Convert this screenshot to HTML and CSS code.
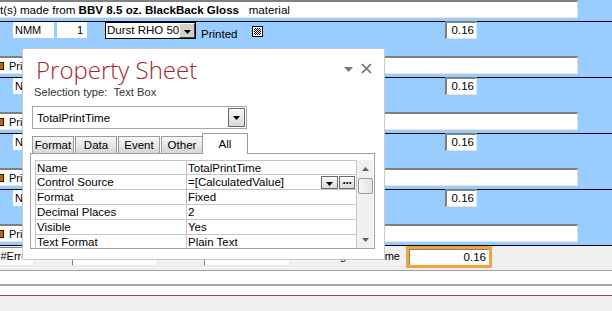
FILE: index.html
```html
<!DOCTYPE html>
<html>
<head>
<meta charset="utf-8">
<link rel="stylesheet" href="styles.css">
</head>
<body>
<div class="form">
  <div class="record">
    <div class="field"><span class="ftext top-text">t(s) made from <b>BBV 8.5 oz. BlackBack Gloss</b>&nbsp;&nbsp;&nbsp;material</span></div>
    <div class="detail">
      <div class="box nmm">NMM</div>
      <div class="box qty">1</div>
      <div class="combo"><span class="combo-text">Durst RHO 500</span><span class="combo-btn"><svg width="7" height="4" viewBox="0 0 7 4"><path d="M0 0H7L3.5 4Z" fill="#000"/></svg></span></div>
      <div class="plabel">Printed</div>
      <div class="check"><i></i></div>
      <div class="num">0.16</div>
    </div>
  </div>
  <div class="record">
    <div class="field"><span class="ficon"></span><span class="ftext">Printed</span></div>
    <div class="detail">
      <div class="box nmm">NMM</div>
      <div class="box qty">1</div>
      <div class="combo"><span class="combo-text">Durst RHO 500</span><span class="combo-btn"><svg width="7" height="4" viewBox="0 0 7 4"><path d="M0 0H7L3.5 4Z" fill="#000"/></svg></span></div>
      <div class="plabel">Printed</div>
      <div class="check"><i></i></div>
      <div class="num">0.16</div>
    </div>
  </div>
  <div class="record">
    <div class="field"><span class="ficon"></span><span class="ftext">Printed</span></div>
    <div class="detail">
      <div class="box nmm">NMM</div>
      <div class="box qty">1</div>
      <div class="combo"><span class="combo-text">Durst RHO 500</span><span class="combo-btn"><svg width="7" height="4" viewBox="0 0 7 4"><path d="M0 0H7L3.5 4Z" fill="#000"/></svg></span></div>
      <div class="plabel">Printed</div>
      <div class="check"><i></i></div>
      <div class="num">0.16</div>
    </div>
  </div>
  <div class="record">
    <div class="field"><span class="ficon"></span><span class="ftext">Printed</span></div>
    <div class="detail">
      <div class="box nmm">NMM</div>
      <div class="box qty">1</div>
      <div class="combo"><span class="combo-text">Durst RHO 500</span><span class="combo-btn"><svg width="7" height="4" viewBox="0 0 7 4"><path d="M0 0H7L3.5 4Z" fill="#000"/></svg></span></div>
      <div class="plabel">Printed</div>
      <div class="check"><i></i></div>
      <div class="num">0.16</div>
    </div>
  </div>
  <div class="field"><span class="ficon"></span><span class="ftext">Printed</span></div>
  <div class="footer">
    <div class="fbox fbox1">#Error</div>
    <div class="fbox fbox2">#Error</div>
    <div class="fbox fbox3">#Error</div>
    <div class="flabel"><span class="fl1">Total Printing</span><span class="fl2">Time</span></div>
    <div class="total"><div class="total-in">0.16</div></div>
  </div>
  <div class="bottom1"></div>
  <div class="bottom2"></div>
  <div class="bottom3"></div>
</div>

<div class="sheet">
  <div class="sheet-head">
    <div class="sheet-title">Property Sheet</div>
    <div class="sheet-icons">
      <svg width="9" height="5" viewBox="0 0 9 5"><path d="M0 0H9L4.5 5Z" fill="#7a7a7a"/></svg>
      <svg class="ic-close" width="11" height="11" viewBox="0 0 11 11"><path d="M1 1L10 10M10 1L1 10" stroke="#6e6e6e" stroke-width="1.7"/></svg>
    </div>
  </div>
  <div class="sel-type">Selection type:&nbsp; Text Box</div>
  <div class="sel-combo">
    <span class="sel-text">TotalPrintTime</span>
    <span class="sel-btn"><svg width="7" height="4" viewBox="0 0 7 4"><path d="M0 0H7L3.5 4Z" fill="#000"/></svg></span>
  </div>
  <div class="tabs">
    <div class="tab">Format</div>
    <div class="tab">Data</div>
    <div class="tab">Event</div>
    <div class="tab">Other</div>
    <div class="tab active">All</div>
  </div>
  <div class="panel">
    <div class="grid">
      <div class="table">
        <div class="row first"><div class="c-name">Name</div><div class="c-val">TotalPrintTime</div></div>
        <div class="row"><div class="c-name">Control Source</div><div class="c-val"><span class="v-text">=[CalculatedValue]</span><span class="mini"><svg width="7" height="4" viewBox="0 0 7 4"><path d="M0 0H7L3.5 4Z" fill="#000"/></svg></span><span class="mini dots">&middot;&middot;&middot;</span></div></div>
        <div class="row"><div class="c-name">Format</div><div class="c-val">Fixed</div></div>
        <div class="row"><div class="c-name">Decimal Places</div><div class="c-val">2</div></div>
        <div class="row"><div class="c-name">Visible</div><div class="c-val">Yes</div></div>
        <div class="row"><div class="c-name">Text Format</div><div class="c-val">Plain Text</div></div>
      </div>
      <div class="vscroll">
        <div class="sb-arrow"><svg width="7" height="4" viewBox="0 0 7 4"><path d="M0 4H7L3.5 0Z" fill="#606060"/></svg></div>
        <div class="sb-thumb"></div>
        <div class="sb-space"></div>
        <div class="sb-arrow"><svg width="7" height="4" viewBox="0 0 7 4"><path d="M0 0H7L3.5 4Z" fill="#606060"/></svg></div>
      </div>
    </div>
  </div>
  <div class="sheet-foot"></div>
</div>
</body>
</html>
```

FILE: styles.css
```css
* { box-sizing: border-box; }
html, body { margin: 0; padding: 0; }
body {
  width: 612px;
  height: 311px;
  overflow: hidden;
  position: relative;
  background: #99ccff;
  font-family: "Liberation Sans", Arial, sans-serif;
  font-size: 11px;
  color: #000;
}

/* ---------- background form ---------- */
.form { display: flex; flex-direction: column; height: 311px; }
.record { height: 56px; flex: none; }
.field {
  flex: none;
  width: 578px;
  height: 18px;
  background: #fff;
  border-top: 2px solid #808080;
  border-right: 1px solid #dcdcdc;
  border-bottom: 1px solid #e6e6e6;
  display: flex;
  align-items: center;
  white-space: nowrap;
  overflow: hidden;
  line-height: 14px;
}
.top-text { font-size: 11.6px; }
.ficon {
  width: 4px;
  height: 8px;
  background: #c8600c;
  border: 1px solid #2a1200;
  border-left: none;
  margin-right: 5px;
}
.detail {
  margin-top: 3px;
  height: 35px;
  border-top: 1px solid #000;
  display: flex;
  align-items: flex-start;
  padding-left: 13px;
}
.box {
  height: 16px;
  background: #fff;
  line-height: 16px;
  white-space: nowrap;
  overflow: hidden;
}
.nmm { width: 41px; padding-left: 2px; }
.qty { width: 30px; margin-left: 3px; text-align: right; padding-right: 4px; }
.combo {
  margin-left: 18px;
  width: 91px;
  height: 17px;
  border: 1px solid #000;
  background: #fff;
  display: flex;
}
.combo-text {
  flex: 1;
  overflow: hidden;
  white-space: nowrap;
  padding-left: 1px;
  line-height: 15px;
  font-size: 11.5px;
}
.combo-btn {
  width: 16px;
  height: 15px;
  background: #d4d0c8;
  border: 1px solid;
  border-color: #fff #404040 #404040 #fff;
  display: flex;
  align-items: flex-end;
  justify-content: center;
  padding-bottom: 3px;
}
.combo-btn svg { display: block; }
.plabel { margin-left: 5px; width: 51px; margin-top: 5px; font-size: 11.5px; line-height: 14px; }
.check {
  width: 11px;
  height: 11px;
  margin-top: 4px;
  border: 1px solid #000;
  padding: 1px;
  background: #fff;
}
.check i {
  display: block;
  width: 100%;
  height: 100%;
  background: repeating-conic-gradient(#000 0 25%, #fff 0 50%) 0 0 / 2px 2px;
}
.num {
  margin-left: 182px;
  margin-top: -1px;
  width: 32px;
  height: 18px;
  background: #fff;
  border-left: 2px solid #808080;
  border-top: 2px solid #808080;
  border-right: 1px solid #e4e4e4;
  border-bottom: 1px solid #e4e4e4;
  text-align: right;
  padding-right: 2px;
  line-height: 14px;
  font-size: 11.5px;
}

/* footer */
.footer {
  flex: none;
  margin-top: 3px;
  height: 25px;
  border-top: 1px solid #000;
  background: #f0f0f0;
  display: flex;
  align-items: flex-start;
}
.fbox {
  height: 19px;
  margin-top: 1px;
  background: #fff;
  border-left: 1px solid #808080;
  border-top: 1px solid #808080;
  border-right: 1px solid #e4e4e4;
  border-bottom: 1px solid #e4e4e4;
  text-align: right;
  padding-right: 3px;
  line-height: 16px;
  white-space: nowrap;
  overflow: hidden;
}
.fbox1 { width: 34px; border-left: none; padding-right: 2px; }
.fbox2 { width: 86px; margin-left: 38px; }
.fbox3 { width: 86px; margin-left: 46px; }
.flabel { display: flex; margin-top: 3px; line-height: 14px; white-space: nowrap; }
.fl1 { width: 56px; display: flex; justify-content: flex-end; }
.fl2 { width: 54px; text-align: right; }
.total {
  margin-left: 6px;
  width: 86px;
  height: 22px;
  border: 3px solid #f5a43c;
  background: #fff;
}
.total-in {
  height: 100%;
  border-left: 1px solid #808080;
  border-top: 1px solid #808080;
  text-align: right;
  padding-right: 3px;
  line-height: 15px;
  font-size: 11.5px;
}
.bottom1 { flex: none; height: 14px; background: #fff; border-top: 1px solid #a0a0a0; }
.bottom2 {
  flex: none;
  height: 12px;
  background: #fff;
  border-top: 2px solid #a8a8a8;
  border-bottom: 1px solid #a04848;
}
.bottom3 { flex: 1; background: #f0f0f0; }

/* ---------- property sheet ---------- */
.sheet {
  position: absolute;
  z-index: 5;
  left: 22px;
  top: 48px;
  width: 363px;
  height: 212px;
  background: #fff;
  border: 1px solid #c8c8c8;
}
.sheet-head {
  height: 37px;
  padding-top: 7px;
  padding-left: 13px;
  padding-right: 12px;
  display: flex;
  align-items: flex-start;
}
.sheet-title {
  font-family: "Open Sans", "Liberation Sans", sans-serif;
  font-weight: 300;
  font-size: 24px;
  line-height: 28px;
  color: #a4262c;
  white-space: nowrap;
}
.sheet-icons {
  margin-left: auto;
  display: flex;
  align-items: flex-start;
  gap: 8px;
}
.sheet-icons svg { display: block; margin-top: 11px; }
.sheet-icons .ic-close { margin-top: 7px; }
.sel-type {
  padding-left: 11px;
  line-height: 13px;
  font-size: 11.2px;
  color: #333;
  white-space: nowrap;
}
.sel-combo {
  margin-top: 7px;
  margin-left: 9px;
  width: 215px;
  height: 23px;
  border: 1px solid #a4a4a4;
  display: flex;
  align-items: center;
  padding: 0 1px 0 4px;
}
.sel-text { flex: 1; font-size: 11.5px; }
.sel-btn {
  width: 17px;
  height: 19px;
  border: 1px solid #6a6a6a;
  background: linear-gradient(#fafafa, #d8d8d8);
  display: flex;
  align-items: center;
  justify-content: center;
}
.sel-btn svg { display: block; }
.tabs {
  margin-top: 4px;
  margin-left: 9px;
  height: 20px;
  display: flex;
  align-items: flex-end;
}
.tab {
  width: 42px;
  height: 17px;
  margin-right: 1px;
  border: 1px solid #9c9c9c;
  border-bottom: none;
  background: linear-gradient(#f7f7f7, #d6d6d6);
  text-align: center;
  line-height: 16px;
  font-size: 11.5px;
}
.tab.active {
  width: 46px;
  height: 21px;
  margin-left: -2px;
  margin-bottom: -1px;
  background: #fff;
  line-height: 20px;
  position: relative;
  z-index: 1;
}
.panel {
  margin-left: 7px;
  width: 345px;
  height: 96px;
  border: 1px solid #a0a0a0;
  padding: 6px 0 0 4px;
  overflow: hidden;
}
.sheet-foot { height: 10px; }
.grid { display: flex; width: 338px; }
.table {
  width: 322px;
  border-left: 1px solid #c4c4c4;
  border-top: 1px solid #c4c4c4;
}
.row { display: flex; height: 15px; border-bottom: 1px solid #c4c4c4; }
.row.first { height: 14px; }
.c-name {
  width: 151px;
  border-right: 1px solid #c4c4c4;
  padding-left: 1px;
  line-height: 14px;
  font-size: 11.5px;
  white-space: nowrap;
}
.c-val {
  width: 170px;
  border-right: 1px solid #c4c4c4;
  padding-left: 1px;
  line-height: 14px;
  font-size: 11.5px;
  white-space: nowrap;
  display: flex;
  align-items: flex-start;
}
.v-text { flex: 1; }
.mini {
  width: 17px;
  height: 13px;
  margin-top: 1px;
  border: 1px solid #6a6a6a;
  background: linear-gradient(#fbfbfb, #dadada);
  display: flex;
  align-items: flex-end;
  justify-content: center;
  padding-bottom: 2px;
}
.mini svg { display: block; }
.mini.dots {
  width: 16px;
  margin-left: 1px;
  margin-right: 1px;
  align-items: center;
  padding-bottom: 0;
  font-weight: bold;
  font-size: 12px;
  line-height: 10px;
  letter-spacing: -1px;
}
.vscroll {
  width: 16px;
  height: 88px;
  background: #f0f0f0;
  display: flex;
  flex-direction: column;
  align-items: center;
}
.sb-arrow {
  height: 17px;
  width: 100%;
  display: flex;
  align-items: center;
  justify-content: center;
}
.sb-arrow svg { display: block; }
.sb-thumb {
  margin-top: 1px;
  width: 15px;
  height: 16px;
  border: 1px solid #9a9a9a;
  border-radius: 2px;
  background: linear-gradient(90deg, #f6f6f6, #e2e2e2);
}
.sb-space { flex: 1; }
```
